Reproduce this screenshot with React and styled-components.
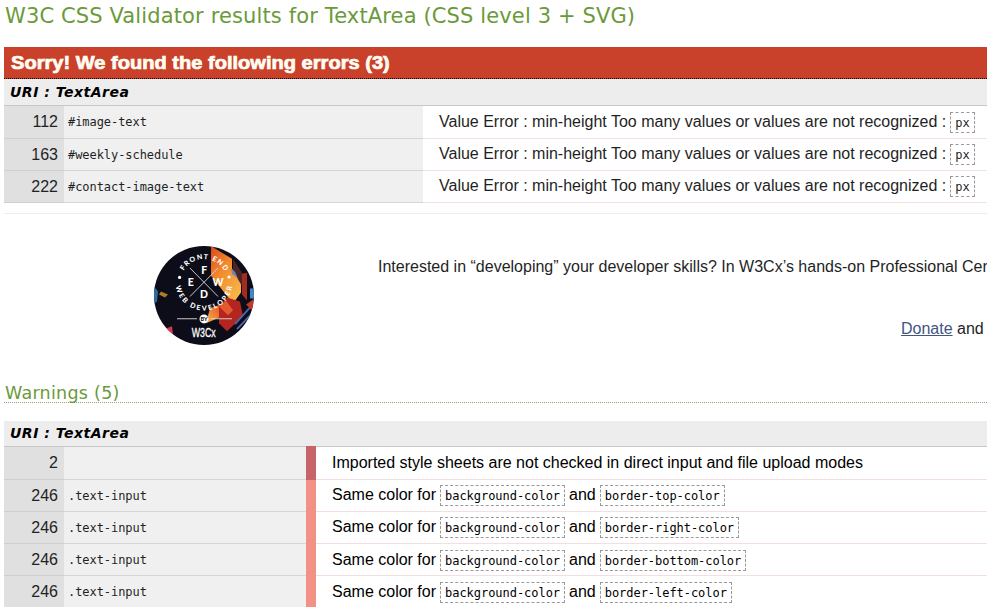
import React from "react";
import styled, { createGlobalStyle } from "styled-components";

const Global = createGlobalStyle`
  * { box-sizing: border-box; }
  html, body { margin: 0; background: #fff; overflow: hidden; }
  body { height: 607px; font-family: "Liberation Sans", Arial, sans-serif; font-size: 16px; color: #1f1f26; }
  h2, h3, h4, p { margin: 0; }
`;

const Page = styled.main`
  width: 987px;
  height: 607px;
  overflow: hidden;
  padding-left: 4px;
  white-space: nowrap;
  display: flex;
  flex-direction: column;
  & > * { flex-shrink: 0; }
`;

const Title = styled.h2`
  height: 47px;
  padding-left: 1px;
  font: 400 21px/32px "DejaVu Sans", Verdana, sans-serif;
  letter-spacing: 0.13px;
  color: #6a9a3a;
`;

const Banner = styled.h3`
  height: 32px;
  padding-left: 7px;
  font: 700 18px/32px "Liberation Sans", Arial, sans-serif;
  -webkit-text-stroke: 0.7px #fffdf2;
  color: #fffdf2;
  background: #c9412a;
  border-bottom: 1px dotted #000;
`;

const WideText = styled.span`
  display: inline-block;
  transform: scaleX(1.115);
  transform-origin: left;
`;

const WarningsTitle = styled.h3`
  height: 22px;
  margin-top: 36px;
  padding-left: 1px;
  font: 400 17.5px/24px "DejaVu Sans", Verdana, sans-serif;
  letter-spacing: 0.27px;
  color: #6a9a3a;
  border-bottom: 1px dotted #93a07c;
  margin-bottom: 18px;
`;

const Uri = styled.h4`
  height: ${(p) => p.$height}px;
  padding-left: 6px;
  font: italic 700 14px/${(p) => p.$height - 1}px "DejaVu Sans", Verdana, sans-serif;
  letter-spacing: 0.5px;
  color: #000;
  background: #ededed;
  border-bottom: 1px solid #c8c8c8;
`;

const Row = styled.div`
  display: grid;
  grid-template-columns: 60px ${(p) => (p.$warning ? "242px 10px" : "359px")} 1fr;
  grid-template-rows: 100%;
  height: ${(p) => p.$height}px;
`;

const Line = styled.div`
  padding-right: 6px;
  text-align: right;
  line-height: 31px;
  background: #e0e0e0;
  border-bottom: 1px solid #cfcfcf;
`;

const Selector = styled.div`
  padding-left: 4px;
  font: 12px/33px "DejaVu Sans Mono", monospace;
  letter-spacing: -0.06px;
  background: #f0f0f0;
  border-bottom: 1px solid #d5d5d5;
`;

const Level = styled.div`
  margin-top: ${(p) => (p.$strong ? "-1px" : 0)};
  background: ${(p) => (p.$strong ? "#c76468" : "#f49186")};
`;

const Message = styled.div`
  display: flex;
  padding-left: 16px;
  line-height: ${(p) => (p.$raised ? 29 : 31)}px;
  color: ${(p) => (p.$dark ? "#000" : "#1f1f26")};
  border-bottom: 1px solid #f3dfe1;
`;

const Code = styled.code`
  height: 21px;
  margin: ${(p) => (p.$raised ? 5 : 6)}px 4px 0 4px;
  padding: 0 4px;
  font: 12px/21px "DejaVu Sans Mono", monospace;
  letter-spacing: -0.04px;
  border: 1px dashed #999;
`;

const Promo = styled.section`
  display: flex;
  height: 132px;
  margin-top: 10px;
  border-top: 1px solid #ececec;
`;

const Badge = styled.svg`
  width: 100px;
  height: 99px;
  margin: 32px 124px 0 150px;
  flex: none;
`;

const PromoText = styled.div`
  width: 609px;
  padding-top: 43px;
  line-height: 20px;
`;

const Support = styled.p`
  margin-top: 42px;
  padding-left: 523px;
`;

const Donate = styled.a`
  color: #42557f;
  text-decoration: underline;
`;

const ERRORS = [
  { line: 112, selector: "#image-text", height: 33, raised: false },
  { line: 163, selector: "#weekly-schedule", height: 32, raised: true },
  { line: 222, selector: "#contact-image-text", height: 32, raised: true },
];

const WARNINGS = [
  { property: "border-top-color", raised: true },
  { property: "border-right-color", raised: true },
  { property: "border-bottom-color", raised: false },
  { property: "border-left-color", raised: false },
];

function W3CxBadge() {
  return (
    <Badge viewBox="0 0 100 100" preserveAspectRatio="none">
      <defs>
        <clipPath id="disc"><circle cx="50" cy="50" r="50" /></clipPath>
        <path id="upper" d="M26.5 36.7 A23.5 23.5 0 0 1 73.5 36.7" />
        <path id="lower" d="M21.5 36.7 A28.5 28.5 0 0 0 78.5 36.7" />
        <linearGradient id="flame" x1="0" y1="0" x2="0.7" y2="1">
          <stop offset="0" stopColor="#d9481f" />
          <stop offset="0.45" stopColor="#f28a2c" />
          <stop offset="1" stopColor="#f7b54a" />
        </linearGradient>
        <linearGradient id="ember" x1="0" y1="1" x2="1" y2="0">
          <stop offset="0" stopColor="#f7b54a" />
          <stop offset="1" stopColor="#e55328" />
        </linearGradient>
      </defs>
      <g clipPath="url(#disc)">
        <rect width="100" height="100" fill="#0c0d18" />
        <path d="M57 0 L78 13 V23 L87 33 V47 L79 58 L57 30Z" fill="url(#flame)" />
        <path d="M79 13 L90 30 V44 L79 25Z" fill="#4a2524" />
        <path d="M77 23 L81 26 L84 33 L78 28Z" fill="#6f86b5" />
        <path d="M88 28 L93 27 V55 L88 49Z" fill="#a32b22" />
        <path d="M96 43 H100 V53 H96Z" fill="#4387c5" />
        <path d="M56 63 L66 59 V72 L52 78Z" fill="url(#ember)" />
        <path d="M65 61 L73 52 L86 56 L89 71 L73 86 L65 78Z" fill="#b3261f" />
        <path d="M65 61 L72 55 L79 65 L74 70Z" fill="#e35a30" />
        <path d="M81 79 L97 61 M83 84 L99 67" stroke="#4c6aad" strokeWidth="1.8" />
        <path d="M92 59 L99 54 V66Z" fill="#c93427" />
        <path d="M0 41 L4 46 L3 56 L0 58Z" fill="#2f6f9e" />
        <path d="M5 49 L7 46 L14 49 L11 52Z" fill="#b07a28" />
        <path d="M10 84 L18 81 L20 98Z" fill="#d63a50" />
        <path d="M36 22.3 L64 51 M64 22.3 L36 51" stroke="#ddd" strokeWidth="0.9" />
        <g fill="#fff" fontFamily="Lato" fontWeight="900" textAnchor="middle">
          <text x="50.3" y="28" fontSize="10.5">F</text>
          <text x="36.7" y="40.4" fontSize="10.5">E</text>
          <text x="64" y="40.4" fontSize="10.5">W</text>
          <text x="50" y="52.9" fontSize="10.5">D</text>
          <text fontSize="7" letterSpacing="1.2"><textPath href="#upper" startOffset="51%">FRONT END</textPath></text>
          <text fontSize="7" letterSpacing="1.9"><textPath href="#lower" startOffset="51%">WEB DEVELOPER</textPath></text>
          <text x="49.7" y="92.4" fontSize="12.5" fontWeight="400" stroke="#fff" strokeWidth="0.3" textLength="24" lengthAdjust="spacingAndGlyphs" fontFamily="Liberation Sans">W3Cx</text>
        </g>
        <circle cx="25.6" cy="31.7" r="1.6" fill="#fff" />
        <circle cx="75" cy="31.3" r="1.6" fill="#fff" />
        <path d="M23 73.5 H43 M57 73.5 H78" stroke="#ddd" strokeWidth="0.9" />
        <circle cx="50" cy="73.7" r="4.5" fill="#fff" />
        <text x="50" y="75.7" fill="#111" fontSize="5.5" fontFamily="Lato" fontWeight="900" textAnchor="middle">BY</text>
      </g>
    </Badge>
  );
}

export default function App() {
  return (
    <Page>
      <Global />
      <Title>W3C CSS Validator results for TextArea (CSS level 3 + SVG)</Title>
      <Banner><WideText>Sorry! We found the following errors (3)</WideText></Banner>
      <Uri $height={27}>URI : TextArea</Uri>
      {ERRORS.map(({ line, selector, height, raised }) => (
        <Row key={line} $height={height}>
          <Line>{line}</Line>
          <Selector>{selector}</Selector>
          <Message $raised={raised}>
            Value Error : min-height Too many values or values are not recognized :
            <Code $raised={raised}>px</Code>
          </Message>
        </Row>
      ))}
      <Promo>
        <W3CxBadge />
        <PromoText>
          <p>Interested in “developing” your developer skills? In W3Cx’s hands-on Professional Certificate</p>
          <Support><Donate>Donate</Donate> and</Support>
        </PromoText>
      </Promo>
      <WarningsTitle>Warnings (5)</WarningsTitle>
      <Uri $height={26}>URI : TextArea</Uri>
      <Row $warning $height={33}>
        <Line>2</Line>
        <Selector />
        <Level $strong />
        <Message $dark>Imported style sheets are not checked in direct input and file upload modes</Message>
      </Row>
      {WARNINGS.map(({ property, raised }) => (
        <Row key={property} $warning $height={32}>
          <Line>246</Line>
          <Selector>.text-input</Selector>
          <Level />
          <Message $dark $raised={raised}>
            Same color for<Code $raised={raised}>background-color</Code>and
            <Code $raised={raised}>{property}</Code>
          </Message>
        </Row>
      ))}
    </Page>
  );
}
